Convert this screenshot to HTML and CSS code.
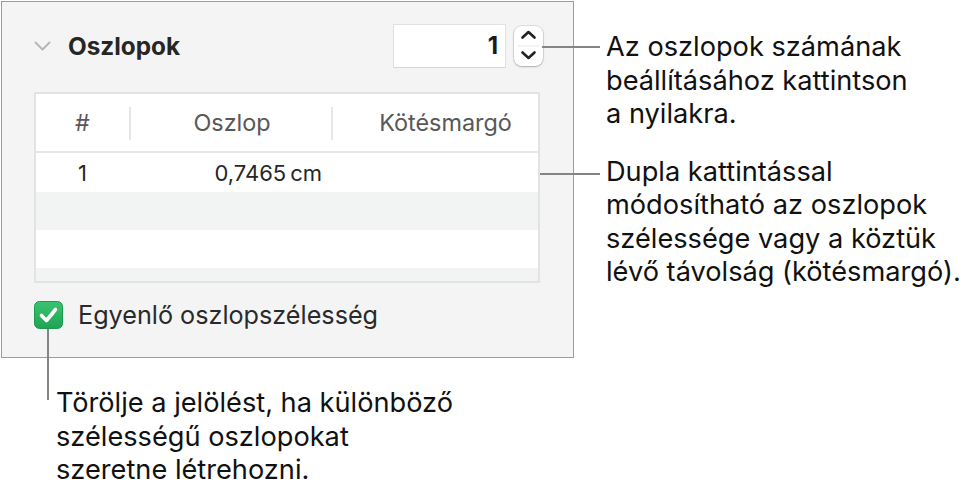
FILE: index.html
```html
<!DOCTYPE html>
<html lang="hu">
<head>
    <meta charset="UTF-8">
    <title>Oszlopok</title>
    <link rel="stylesheet" href="styles.css">
</head>
<body>
    <div class="figure">
        <!-- Inspector panel -->
        <div class="panel">
            <div class="panel-head">
                <svg class="disclosure" width="17" height="10" viewBox="0 0 17 10">
                    <polyline points="1.5,1.5 8.5,8.5 15.5,1.5" fill="none" stroke="#b5b5b5" stroke-width="1.8" stroke-linecap="round" stroke-linejoin="round"/>
                </svg>
                <span class="panel-title">Oszlopok</span>
                <div class="stepper">
                    <div class="stepper-field">1</div>
                    <svg class="stepper-arrows" width="29" height="40" viewBox="0 0 29 40">
                        <polyline points="8.5,11.5 14.5,6 20.5,11.5" fill="none" stroke="#222" stroke-width="2.6" stroke-linecap="round" stroke-linejoin="round"/>
                        <line x1="4" y1="20" x2="25" y2="20" stroke="#e6e6e6" stroke-width="1"/>
                        <polyline points="8.5,26.5 14.5,32 20.5,26.5" fill="none" stroke="#222" stroke-width="2.6" stroke-linecap="round" stroke-linejoin="round"/>
                    </svg>
                </div>
            </div>

            <div class="col-table">
                <div class="col-row col-header">
                    <div class="cell c-num">#</div>
                    <div class="cell c-width sep">Oszlop</div>
                    <div class="cell c-gutter sep">Kötésmargó</div>
                </div>
                <div class="col-row col-body first">
                    <div class="cell c-num">1</div>
                    <div class="cell c-width">0,7465&thinsp;cm</div>
                    <div class="cell c-gutter"></div>
                </div>
                <div class="col-row col-body alt"></div>
                <div class="col-row col-body"></div>
                <div class="col-filler"></div>
            </div>

            <label class="check-row">
                <svg class="checkbox" width="29" height="28" viewBox="0 0 29 28">
                    <defs>
                        <linearGradient id="cbg" x1="0" y1="0" x2="0" y2="1">
                            <stop offset="0" stop-color="#3bc46f"/>
                            <stop offset="1" stop-color="#1ea453"/>
                        </linearGradient>
                    </defs>
                    <rect x="0.5" y="0.5" width="28" height="27" rx="5" fill="url(#cbg)" stroke="#1d9a4d" stroke-width="1"/>
                    <polyline points="7.5,14.5 12.5,19.5 21.5,8.5" fill="none" stroke="#fff" stroke-width="3.6" stroke-linecap="round" stroke-linejoin="round"/>
                </svg>
                <span class="check-label">Egyenlő oszlopszélesség</span>
            </label>
        </div>

        <!-- Callouts on the right -->
        <div class="notes">
            <p class="note">Az oszlopok számának<br>beállításához kattintson<br>a nyilakra.</p>
            <p class="note note-second">Dupla kattintással<br>módosítható az oszlopok<br>szélessége vagy a köztük<br>lévő távolság (kötésmargó).</p>
        </div>

        <!-- Callout below -->
        <div class="note-bottom">
            <p class="note">Törölje a jelölést, ha különböző<br>szélességű oszlopokat<br>szeretne létrehozni.</p>
        </div>

        <!-- Leader lines -->
        <span class="leader leader-stepper"></span>
        <span class="leader leader-table"></span>
        <span class="leader leader-check"></span>
    </div>
</body>
</html>
```

FILE: styles.css
```css
body {
    margin: 0;
    background: #fff;
    font-family: Inter, "Noto Sans", sans-serif;
    color: #111;
}

.figure {
    position: relative;
    width: 974px;
    height: 497px;
    display: grid;
    grid-template-columns: 606px 1fr;
    grid-template-rows: 358px 1fr;
}

/* Panel */
.panel {
    box-sizing: border-box;
    width: 573px;
    height: 357px;
    margin: 1px 0 0 1px;
    padding: 22px 30px 0 32px;
    background: #f4f4f4;
    border: 1px solid #9c9c9c;
}

.panel-head {
    display: flex;
    align-items: center;
    height: 44px;
}

.disclosure {
    margin-right: 17px;
}

.panel-title {
    font-size: 24.3px;
    font-weight: 700;
    color: #262626;
}

.stepper {
    margin-left: auto;
    display: flex;
    align-items: center;
    gap: 8px;
}

.stepper-field {
    box-sizing: border-box;
    width: 113px;
    height: 44px;
    padding-right: 7px;
    background: #fff;
    border: 1px solid #e2e2e2;
    border-bottom-color: #d4d4d4;
    text-align: right;
    font-size: 24px;
    font-weight: 700;
    line-height: 42px;
    color: #1a1a1a;
}

.stepper-arrows {
    background: #fff;
    border-radius: 8px;
    box-shadow: 0 0 0 1px rgba(0, 0, 0, 0.09), 0 1px 2px rgba(0, 0, 0, 0.22);
}

/* Column table */
.col-table {
    box-sizing: border-box;
    width: 506px;
    margin-top: 24px;
    border: 2px solid #e3e3e3;
    background: #fff;
}

.col-row {
    display: grid;
    grid-template-columns: 93px 202px 1fr;
    align-items: center;
}

.col-header {
    height: 57px;
    border-bottom: 2px solid #e6e6e6;
    font-size: 23.4px;
    color: #585858;
}

.col-body {
    height: 38px;
    font-size: 22px;
    color: #262626;
}

.col-body.first {
    height: 39px;
}

.col-body.alt {
    background: #f2f3f3;
}

.col-filler {
    height: 13px;
    background: #f2f3f3;
}

.cell {
    position: relative;
    height: 100%;
    display: flex;
    align-items: center;
}

.c-num {
    justify-content: center;
}

.col-header .c-width {
    justify-content: center;
    padding-left: 4px;
}

.col-header .c-gutter {
    justify-content: center;
    padding-left: 22px;
}

.col-body .c-width {
    justify-content: flex-end;
    padding-right: 9px;
}

.sep::before {
    content: "";
    position: absolute;
    left: 0;
    top: 13px;
    width: 2px;
    height: 33px;
    background: #e6e6e6;
}

/* Checkbox */
.check-row {
    display: flex;
    align-items: center;
    margin-top: 18px;
    height: 28px;
}

.checkbox {
    flex: none;
}

.check-label {
    margin-left: 15px;
    font-size: 25.2px;
    color: #2a2a2a;
}

/* Callout text */
.note {
    margin: 0;
    font-size: 27.2px;
    line-height: 33.5px;
    color: #111;
}

.notes {
    padding-top: 30px;
}

.note-second {
    margin-top: 24px;
}

.note-bottom {
    grid-column: 1 / 3;
    padding: 28px 0 0 56px;
}

/* Leader lines */
.leader {
    position: absolute;
    background: #858585;
}

.leader-stepper {
    left: 542px;
    top: 46px;
    width: 58px;
    height: 2px;
}

.leader-table {
    left: 540px;
    top: 173px;
    width: 60px;
    height: 2px;
}

.leader-check {
    left: 47px;
    top: 329px;
    width: 2px;
    height: 71px;
}
```
